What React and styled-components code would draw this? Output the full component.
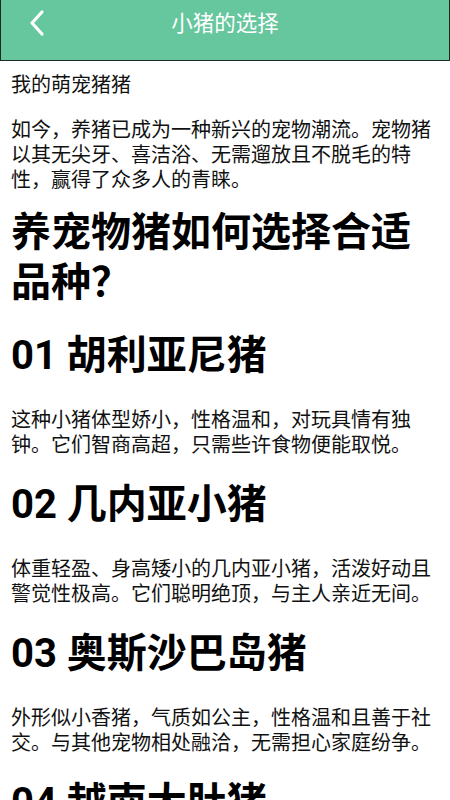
import React from "react";
import styled, { createGlobalStyle } from "styled-components";

const Global = createGlobalStyle`
  html, body { margin: 0; padding: 0; background: #fff; }
  body {
    font-family: "Noto Sans CJK SC", "Noto Sans", sans-serif;
    color: #000;
  }
`;

const Page = styled.div`
  width: 450px;
  height: 800px;
  overflow: hidden;
  background: #fff;
`;

const Header = styled.header`
  box-sizing: border-box;
  height: 61px;
  background: #66c69e;
  border: 1px solid #1a2a22;
  border-top: none;
  position: relative;
  display: flex;
  justify-content: center;
  padding-top: 6px;
`;

const BackButton = styled.button`
  position: absolute;
  left: 24px;
  top: 8px;
  width: 24px;
  height: 30px;
  padding: 0;
  border: none;
  background: none;
  display: flex;
  align-items: center;
  justify-content: center;
`;

const Title = styled.h1`
  margin: 0;
  font-size: 21.5px;
  line-height: 32px;
  font-weight: 400;
  color: #fff;
`;

const Content = styled.main`
  padding: 0 11px;
`;

const Para = styled.p`
  margin: ${(p) => p.$mt ?? 0}px 0 0;
  font-size: 20px;
  line-height: 25px;
  color: #111;
`;

const BigTitle = styled.h2`
  margin: ${(p) => p.$mt ?? 0}px 0 0;
  font-family: Roboto, "Noto Sans CJK SC", sans-serif;
  font-size: 40px;
  line-height: 50px;
  font-weight: 700;
`;

const Section = styled.h3`
  margin: ${(p) => p.$mt ?? 0}px 0 0;
  font-family: Roboto, "Noto Sans CJK SC", sans-serif;
  font-size: 40px;
  line-height: 52px;
  font-weight: 700;
`;

const Chevron = () => (
  <svg width="20" height="28" viewBox="0 0 20 28" fill="none">
    <path d="M15 3 L5 14 L15 25" stroke="#fff" strokeWidth="3.2" strokeLinecap="round" strokeLinejoin="round" />
  </svg>
);

const breeds = [
  { title: "01 胡利亚尼猪", text: "这种小猪体型娇小，性格温和，对玩具情有独钟。它们智商高超，只需些许食物便能取悦。" },
  { title: "02 几内亚小猪", text: "体重轻盈、身高矮小的几内亚小猪，活泼好动且警觉性极高。它们聪明绝顶，与主人亲近无间。" },
  { title: "03 奥斯沙巴岛猪", text: "外形似小香猪，气质如公主，性格温和且善于社交。与其他宠物相处融洽，无需担心家庭纷争。" },
  { title: "04 越南大肚猪", text: "越南大肚猪性情温顺，聪明伶俐，易于训练。" },
];

export default function App() {
  return (
    <Page>
      <Global />
      <Header>
        <BackButton aria-label="返回">
          <Chevron />
        </BackButton>
        <Title>小猪的选择</Title>
      </Header>
      <Content>
        <Para $mt={10}>我的萌宠猪猪</Para>
        <Para $mt={20}>如今，养猪已成为一种新兴的宠物潮流。宠物猪以其无尖牙、喜洁浴、无需遛放且不脱毛的特性，赢得了众多人的青睐。</Para>
        <BigTitle $mt={17}>养宠物猪如何选择合适品种？</BigTitle>
        {breeds.map((b, i) => (
          <React.Fragment key={b.title}>
            <Section $mt={i === 0 ? 22 : 23}>{b.title}</Section>
            <Para $mt={24}>{b.text}</Para>
          </React.Fragment>
        ))}
      </Content>
    </Page>
  );
}
